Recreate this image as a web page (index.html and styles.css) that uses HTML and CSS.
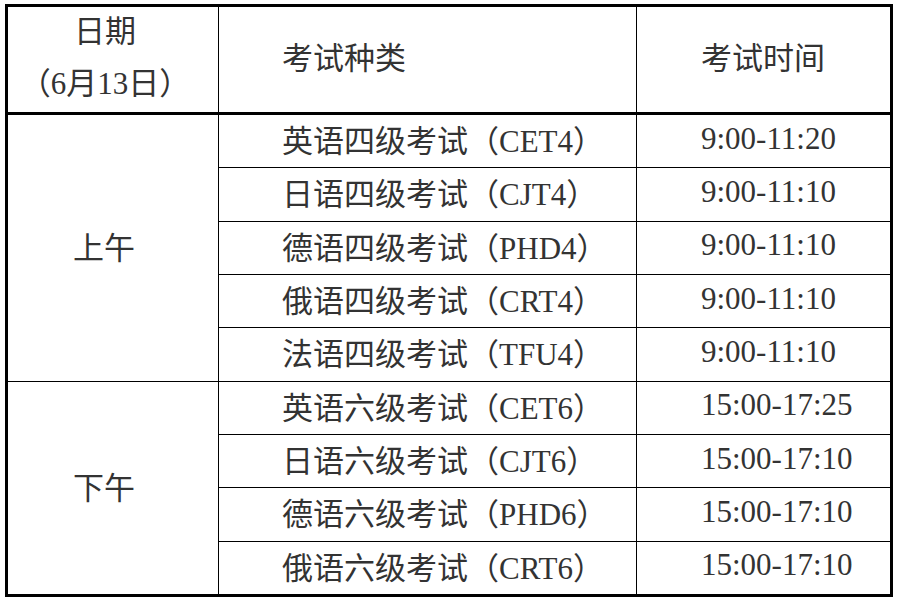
FILE: index.html
```html
<!DOCTYPE html>
<html lang="zh-CN">
<head>
<meta charset="utf-8">
<title>考试时间表</title>
<link rel="stylesheet" href="styles.css">
</head>
<body>
<div class="table">
  <div class="cell head date"><span>日期</span><span>（6月13日）</span></div>
  <div class="cell head name">考试种类</div>
  <div class="cell head time">考试时间</div>

  <div class="cell period am">上午</div>
  <div class="cell name">英语四级考试（CET4）</div>
  <div class="cell time">9:00-11:20</div>
  <div class="cell name">日语四级考试（CJT4）</div>
  <div class="cell time">9:00-11:10</div>
  <div class="cell name">德语四级考试（PHD4）</div>
  <div class="cell time">9:00-11:10</div>
  <div class="cell name">俄语四级考试（CRT4）</div>
  <div class="cell time">9:00-11:10</div>
  <div class="cell name">法语四级考试（TFU4）</div>
  <div class="cell time">9:00-11:10</div>

  <div class="cell period pm">下午</div>
  <div class="cell name">英语六级考试（CET6）</div>
  <div class="cell time">15:00-17:25</div>
  <div class="cell name">日语六级考试（CJT6）</div>
  <div class="cell time">15:00-17:10</div>
  <div class="cell name">德语六级考试（PHD6）</div>
  <div class="cell time">15:00-17:10</div>
  <div class="cell name">俄语六级考试（CRT6）</div>
  <div class="cell time">15:00-17:10</div>
</div>
</body>
</html>
```
FILE: styles.css
```css
html, body {
  margin: 0;
  padding: 0;
  background: #ffffff;
}

body {
  padding: 4px 0 0 5px;
}

.table {
  display: grid;
  width: 882px;
  height: 587px;
  border: 3px solid #000;
  background: #000;
  grid-template-columns: 210px 417px 253px;
  grid-template-rows: 107px repeat(9, 1fr);
  column-gap: 1px;
  row-gap: 1px;
  font-family: "Liberation Serif", "Noto Sans CJK SC", serif;
  font-size: 31px;
  color: #333;
}

.cell {
  background: #fff;
  display: flex;
  align-items: center;
  white-space: nowrap;
  padding-bottom: 5px;
}

.head {
  margin-bottom: 2px;
  padding-bottom: 8px;
}

.date {
  flex-direction: column;
  justify-content: center;
  align-items: center;
  line-height: 52px;
  padding-right: 16px;
  padding-bottom: 4px;
}

.period {
  justify-content: center;
  padding-right: 18px;
  grid-column: 1;
}

.am {
  grid-row: 2 / span 5;
}

.pm {
  grid-row: 7 / span 4;
}

.name {
  padding-left: 63px;
}

.time {
  padding-left: 64px;
}
```
